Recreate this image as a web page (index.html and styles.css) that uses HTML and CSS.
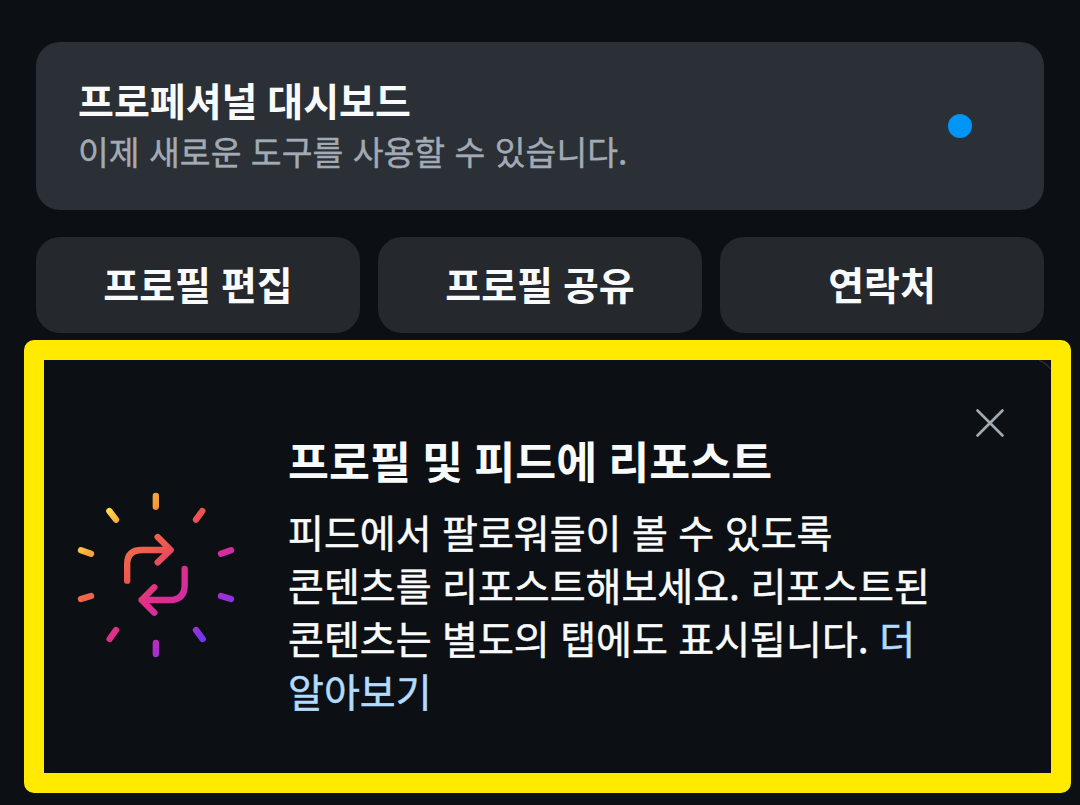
FILE: index.html
```html
<!DOCTYPE html>
<html lang="ko">
<head>
	<meta charset="utf-8"/>
	<title>프로필</title>
	<link rel="stylesheet" href="styles.css">
</head>

<body>
	<div class="profile">
		<div class="dashboard">
			<div class="dashboard-text">
				<div class="dashboard-title">프로페셔널 대시보드</div>
				<div class="dashboard-desc">이제 새로운 도구를 사용할 수 있습니다.</div>
			</div>
			<span class="dot"></span>
		</div>
		<div class="actions">
			<button type="button">프로필 편집</button>
			<button type="button">프로필 공유</button>
			<button type="button">연락처</button>
		</div>
	</div>

	<div class="notice">
		<svg class="corner" width="16" height="16" viewBox="0 0 16 16"><path d="M4 .3Q10.500 2.500 15.500 9"/></svg>
		<svg class="repost-icon" viewBox="0 0 540 570">
			<defs>
				<linearGradient id="g" gradientUnits="userSpaceOnUse" x1="110" y1="110" x2="440" y2="440">
					<stop offset="0" stop-color="#ffd84a"/>
					<stop offset=".1" stop-color="#f8a83c"/>
					<stop offset=".18" stop-color="#f5a03a"/>
					<stop offset=".27" stop-color="#f0684a"/>
					<stop offset=".42" stop-color="#ee554f"/>
					<stop offset=".58" stop-color="#df2f88"/>
					<stop offset=".73" stop-color="#d42ca0"/>
					<stop offset=".86" stop-color="#a82fce"/>
					<stop offset=".93" stop-color="#9b30d8"/>
					<stop offset="1" stop-color="#7136ee"/>
				</linearGradient>
			</defs>
			<g fill="none" stroke="url(#g)" stroke-width="19" stroke-linecap="round" stroke-linejoin="round">
				<!-- rays -->
				<path d="M269.500 48V80.500L269.600 80M130 93L150 119M409 93L390 119M45 211L75 221M495 211L465 221M45 357L75 348M495 357L465 348M150 450L131 477M390 450L410 477M269.500 489V522L269.600 521"/>
				<!-- arrows -->
				<path d="M183.500 302V253Q183.500 210 228 210H313M275 171L314 210L275 247M356 267V315Q356 360 311 360H227M265 322L227 360L265 398"/>
			</g>
		</svg>
		<div class="notice-body">
			<h2>프로필 및 피드에 리포스트</h2>
			<p>피드에서 팔로워들이 볼 수 있도록<br>콘텐츠를 리포스트해보세요. 리포스트된<br>콘텐츠는 별도의 탭에도 표시됩니다. <a href="#">더<br>알아보기</a></p>
		</div>
		<svg class="close" width="30" height="30" viewBox="0 0 30 30"><path d="M2.500 2.500L27.500 27.500M27.500 2.500L2.500 27.500"/></svg>
	</div>
</body>
</html>
```
FILE: styles.css
```css
* {
	box-sizing: border-box;
}
body {
	margin: 0;
	height: 805px;
	overflow: hidden;
	background: #0c1014;
	color: #f9fbfb;
	font-family: "Noto Sans CJK KR", sans-serif;
}
.profile {
	padding: 42px 36px 0;
}
.dashboard {
	display: flex;
	align-items: center;
	justify-content: space-between;
	height: 168px;
	padding: 0 72px 0 42px;
	border-radius: 24px;
	background: #2b3036;
}
.dashboard-text {
	padding-bottom: 3px;
}
.dashboard-title {
	font-size: 39px;
	font-weight: bold;
	line-height: 52px;
	word-spacing: -1px;
}
.dashboard-desc {
	color: #a2aab4;
	font-size: 33.500px;
	line-height: 51px;
	-webkit-text-stroke: .4px #a2aab4;
}
.dot {
	width: 24px;
	height: 24px;
	border-radius: 50%;
	background: #0095f6;
}
.actions {
	display: grid;
	grid-template-columns: repeat(3, 1fr);
	gap: 18px;
	margin-top: 27px;
}
.actions button {
	height: 96px;
	padding: 0 0 5px;
	border: 0;
	border-radius: 24px;
	background: #25282d;
	color: #f9fbfb;
	font-family: inherit;
	font-size: 39px;
	font-weight: bold;
	word-spacing: -1px;
}
.notice {
	position: relative;
	display: flex;
	align-items: flex-start;
	width: 1047px;
	height: 453px;
	margin: 7px 0 0 24px;
	border: 20px solid #ffea00;
	border-radius: 10px;
}
.repost-icon {
	flex: none;
	width: 180px;
	height: 190px;
	margin: 120px 42px 0 22px;
}
.notice-body {
	flex: 1;
	padding-top: 68px;
	white-space: nowrap;
}
.notice h2 {
	margin: 0;
	font-size: 44.500px;
	font-weight: bold;
	line-height: 64px;
	word-spacing: -1.200px;
}
.notice p {
	margin: 13px 0 0;
	font-size: 39px;
	line-height: 53px;
	word-spacing: -.400px;
	-webkit-text-stroke: .5px;
}
.notice a {
	color: #b3dbff;
	text-decoration: none;
}
.close {
	flex: none;
	margin: 48px 46px 0 0;
	fill: none;
	stroke: #a2aab4;
	stroke-width: 2.600;
	stroke-linecap: round;
}
/* rounded edge of the card under the frame */
.corner {
	position: absolute;
	top: 0;
	right: 0;
	fill: none;
	stroke: #2b2f34;
	stroke-width: 1.500;
}
```
